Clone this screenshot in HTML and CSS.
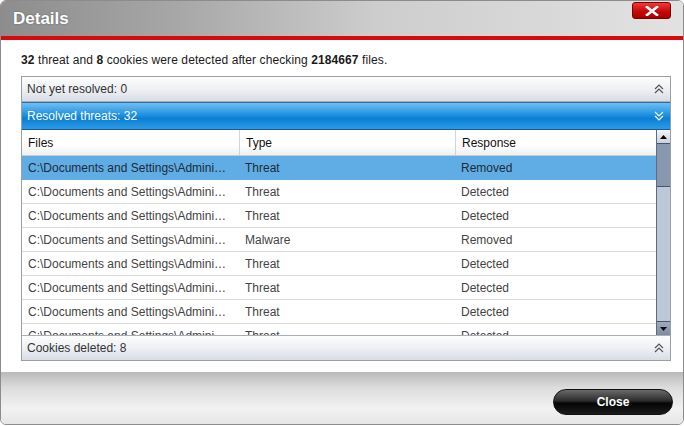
FILE: index.html
```html
<!DOCTYPE html>
<html lang="en">
<head>
  <meta charset="UTF-8">
  <title>Details</title>
  <link rel="stylesheet" href="styles.css">
</head>
<body>
  <div class="window">
    <div class="titlebar">
      <h1>Details</h1>
      <button class="close-x" aria-label="Close">
        <svg width="14" height="10" viewBox="0 0 14 10"><path d="M2 1 L12 9 M12 1 L2 9" stroke="#fff" stroke-width="2.6" stroke-linecap="square"/></svg>
      </button>
    </div>
    <div class="redline"></div>

    <div class="content">
      <p class="summary"><b>32</b> threat and <b>8</b> cookies were detected after checking <b>2184667</b> files.</p>

      <div class="panel">
        <div class="acc">
          <span>Not yet resolved: 0</span>
          <svg class="chev" width="10" height="10" viewBox="0 0 10 10"><path d="M1 5 L5 1 L9 5 M1 9 L5 5 L9 9" fill="none" stroke="#555" stroke-width="1.2"/></svg>
        </div>
        <div class="acc open">
          <span>Resolved threats: 32</span>
          <svg class="chev" width="10" height="10" viewBox="0 0 10 10"><path d="M1 1 L5 5 L9 1 M1 5 L5 9 L9 5" fill="none" stroke="#fff" stroke-width="1.2"/></svg>
        </div>

        <div class="list">
          <div class="table">
            <div class="row head">
              <div class="cell">Files</div>
              <div class="cell">Type</div>
              <div class="cell">Response</div>
            </div>
            <div class="row selected">
              <div class="cell">C:\Documents and Settings\Admini…</div>
              <div class="cell">Threat</div>
              <div class="cell">Removed</div>
            </div>
            <div class="row">
              <div class="cell">C:\Documents and Settings\Admini…</div>
              <div class="cell">Threat</div>
              <div class="cell">Detected</div>
            </div>
            <div class="row">
              <div class="cell">C:\Documents and Settings\Admini…</div>
              <div class="cell">Threat</div>
              <div class="cell">Detected</div>
            </div>
            <div class="row">
              <div class="cell">C:\Documents and Settings\Admini…</div>
              <div class="cell">Malware</div>
              <div class="cell">Removed</div>
            </div>
            <div class="row">
              <div class="cell">C:\Documents and Settings\Admini…</div>
              <div class="cell">Threat</div>
              <div class="cell">Detected</div>
            </div>
            <div class="row">
              <div class="cell">C:\Documents and Settings\Admini…</div>
              <div class="cell">Threat</div>
              <div class="cell">Detected</div>
            </div>
            <div class="row">
              <div class="cell">C:\Documents and Settings\Admini…</div>
              <div class="cell">Threat</div>
              <div class="cell">Detected</div>
            </div>
            <div class="row">
              <div class="cell">C:\Documents and Settings\Admini…</div>
              <div class="cell">Threat</div>
              <div class="cell">Detected</div>
            </div>
          </div>
          <div class="scrollbar">
            <div class="sb-btn"><svg width="7" height="4" viewBox="0 0 7 4"><path d="M0 4 L3.5 0 L7 4 Z" fill="#000"/></svg></div>
            <div class="sb-thumb"></div>
            <div class="sb-track"></div>
            <div class="sb-btn down"><svg width="7" height="4" viewBox="0 0 7 4"><path d="M0 0 L3.5 4 L7 0 Z" fill="#000"/></svg></div>
          </div>
        </div>

        <div class="acc last">
          <span>Cookies deleted: 8</span>
          <svg class="chev" width="10" height="10" viewBox="0 0 10 10"><path d="M1 5 L5 1 L9 5 M1 9 L5 5 L9 9" fill="none" stroke="#555" stroke-width="1.2"/></svg>
        </div>
      </div>
    </div>

    <div class="footer">
      <button class="btn-close">Close</button>
    </div>
  </div>
</body>
</html>
```

FILE: styles.css
```css
html, body {
  margin: 0;
  padding: 0;
  background: #fff;
}
body {
  font-family: "Liberation Sans", Arial, sans-serif;
  font-size: 12px;
  color: #1a1a1a;
}
.window {
  width: 684px;
  height: 425px;
  box-sizing: border-box;
  border: 1px solid #8c8c8c;
  border-radius: 6px;
  overflow: hidden;
  display: flex;
  flex-direction: column;
  background: #fff;
}
.titlebar {
  height: 35px;
  display: flex;
  align-items: center;
  justify-content: space-between;
  padding: 0 12px 0 12px;
  background: linear-gradient(to right, #8d8d8d 0%, #a6a6a6 25%, #cdcdcd 55%, #e2e2e2 100%);
  flex-shrink: 0;
}
.titlebar h1 {
  margin: 0;
  font-size: 17px;
  font-weight: bold;
  color: #fff;
  text-shadow: 0 0 2px rgba(0, 0, 0, 0.35);
}
.close-x {
  align-self: flex-start;
  margin-top: 1px;
  width: 39px;
  height: 17px;
  border: 1px solid #7a0000;
  border-radius: 3px;
  background: linear-gradient(#f03a3a, #c80808 55%, #a80000);
  display: flex;
  align-items: center;
  justify-content: center;
  padding: 0;
}
.redline {
  height: 4px;
  background: #d80a0a;
  flex-shrink: 0;
}
.content {
  flex: 1;
  padding: 0 12px 0 20px;
}
.summary {
  margin: 13px 0 9px;
  line-height: 14px;
  letter-spacing: 0.1px;
}
.panel {
  border: 1px solid #9aa0a8;
}
.acc {
  height: 24px;
  display: flex;
  align-items: center;
  justify-content: space-between;
  padding: 0 6px 0 5px;
  color: #333;
  background: linear-gradient(#fdfdfd, #eef0f4 50%, #d9dde4);
  border-bottom: 1px solid #a8aeb8;
}
.acc.open {
  height: 26px;
  color: #fff;
  background: linear-gradient(#72bef0, #1f92e2 45%, #0b7fd4 60%, #2c9be6);
  border-top: 1px solid #2d6ea8;
  border-bottom: 1px solid #1c5a94;
}
.acc.last {
  border-bottom: none;
  border-top: 1px solid #a8aeb8;
}
.list {
  display: flex;
  height: 205px;
  overflow: hidden;
}
.table {
  flex: 1;
  overflow: hidden;
}
.row {
  display: grid;
  grid-template-columns: 217px 216px 1fr;
  height: 24px;
  border-bottom: 1px solid #dadada;
  box-sizing: border-box;
  color: #444;
}
.row.head {
  height: 26px;
  color: #111;
  background: linear-gradient(#fff, #fff 60%, #eef0f2);
  border-bottom: 1px solid #c8ccd2;
}
.row.head .cell + .cell {
  border-left: 1px solid #d4d4d4;
}
.row.selected {
  background: #5fade4;
  color: #1d2a38;
  border-bottom-color: #5fade4;
}
.cell {
  display: flex;
  align-items: center;
  padding-left: 6px;
  white-space: nowrap;
  overflow: hidden;
}
.scrollbar {
  width: 13px;
  display: flex;
  flex-direction: column;
  border-left: 1px solid #5d6b7c;
}
.sb-btn {
  height: 13px;
  background: linear-gradient(#f4f6f9, #c9d1dc);
  border-bottom: 1px solid #4a5563;
  display: flex;
  align-items: center;
  justify-content: center;
}
.sb-btn.down {
  border-bottom: none;
  border-top: 1px solid #4a5563;
  background: linear-gradient(#9eacbf, #7c8ba0);
}
.sb-thumb {
  height: 42px;
  background: #8797ad;
  border-bottom: 1px solid #4a5563;
}
.sb-track {
  flex: 1;
  background: #bcc8d8;
}
.footer {
  height: 52px;
  flex-shrink: 0;
  display: flex;
  align-items: center;
  justify-content: flex-end;
  padding: 0 10px 0 0;
  background: linear-gradient(#b9b9b9, #dcdcdc 30%, #f2f2f2 70%, #e6e6e6);
}
.btn-close {
  width: 120px;
  height: 26px;
  margin-top: 8px;
  border: 1px solid #111;
  border-radius: 13px;
  background: linear-gradient(#6a6a6a, #2c2c2c 45%, #050505 55%, #1c1c1c);
  color: #fff;
  font-family: "Liberation Sans", Arial, sans-serif;
  font-size: 12px;
  font-weight: bold;
}
```
